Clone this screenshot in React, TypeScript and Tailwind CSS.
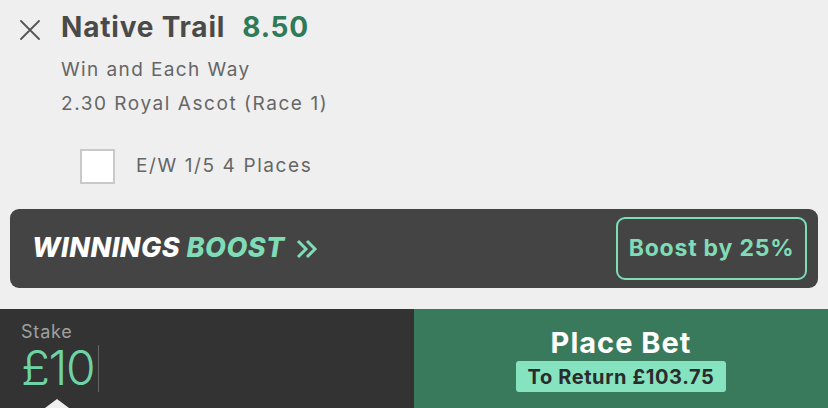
const mint = "#7fdcb6";

function Chevrons() {
  return (
    <svg width="22" height="20" viewBox="0 0 22 20" fill="none" stroke={mint} strokeWidth="3" strokeLinecap="butt" strokeLinejoin="miter">
      <path d="M2 2l8 8-8 8" />
      <path d="M11 2l8 8-8 8" />
    </svg>
  );
}

function CloseIcon() {
  return (
    <svg width="20" height="20" viewBox="0 0 20 20" stroke="#555" strokeWidth="1.8" strokeLinecap="round">
      <path d="M1 1l18 18M19 1L1 19" />
    </svg>
  );
}

export default function App() {
  return (
    <div className="w-[828px] h-[408px] bg-[#efefef] overflow-hidden flex flex-col font-['Inter',sans-serif]">
      {/* selection details */}
      <div className="flex pt-[11px] h-[209px]">
        <div className="w-[61px] pl-[20px] pt-[9px]">
          <CloseIcon />
        </div>
        <div className="flex flex-col">
          <div className="flex items-baseline gap-[17px] leading-[32px] text-[28px] font-bold tracking-[0.8px]">
            <span className="text-[#4a4a4a]">Native Trail</span>
            <span className="text-[#2f7a57]">8.50</span>
          </div>
          <div className="mt-[14px] text-[19px] leading-[26px] tracking-[1.4px] text-[#666]">Win and Each Way</div>
          <div className="mt-[8px] text-[19px] leading-[26px] tracking-[1.55px] text-[#666]">2.30 Royal Ascot (Race 1)</div>
          <label className="mt-[32px] ml-[19px] flex items-center gap-[21px]">
            <span className="w-[35px] h-[35px] bg-white border-2 border-[#c9c9c9]" />
            <span className="text-[19px] tracking-[1.6px] text-[#666]">E/W 1/5 4 Places</span>
          </label>
        </div>
      </div>

      {/* boost banner */}
      <div className="mx-[10px] h-[79px] rounded-[9px] bg-[#444444] flex items-center justify-between pl-[22px] pr-[11px]">
        <div className="flex items-center gap-[11px] italic font-extrabold text-[27px] tracking-[0.5px]">
          <span>
            <span className="text-white">WINNINGS</span>{" "}
            <span className="text-[#7fdcb6]">BOOST</span>
          </span>
          <Chevrons />
        </div>
        <button className="h-[63px] w-[191px] rounded-[9px] border-2 border-[#7fdcb6] text-[#7fdcb6] font-bold text-[23px] tracking-[0.8px]">
          Boost by 25%
        </button>
      </div>

      {/* stake and place bet */}
      <div className="mt-[21px] flex h-[99px]">
        <div className="relative w-[414px] bg-[#333333] pl-[21px] pt-[12px]">
          <div className="text-[18px] leading-[22px] tracking-[0.8px] text-[#a0a0a0]">Stake</div>
          <div className="flex items-center">
            <span className="text-[48px] leading-[50px] font-light text-[#6fd3a8] tracking-[-1.5px]">£10</span>
            <span className="ml-[4px] w-px h-[47px] bg-[#666]" />
          </div>
          <div className="absolute left-[45px] bottom-0 w-0 h-0 border-l-[12px] border-r-[12px] border-b-[9px] border-l-transparent border-r-transparent border-b-[#efefef]" />
        </div>
        <div className="flex-1 bg-[#3a7a5c] flex flex-col items-center pt-[16px]">
          <div className="text-[29px] leading-[36px] font-bold tracking-[1px] text-white">Place Bet</div>
          <div className="h-[31px] px-[12px] rounded-[3px] bg-[#86e3c0] flex items-center text-[20px] font-bold tracking-[0.6px] text-[#2b2b2b]">
            To Return £103.75
          </div>
        </div>
      </div>
    </div>
  );
}
